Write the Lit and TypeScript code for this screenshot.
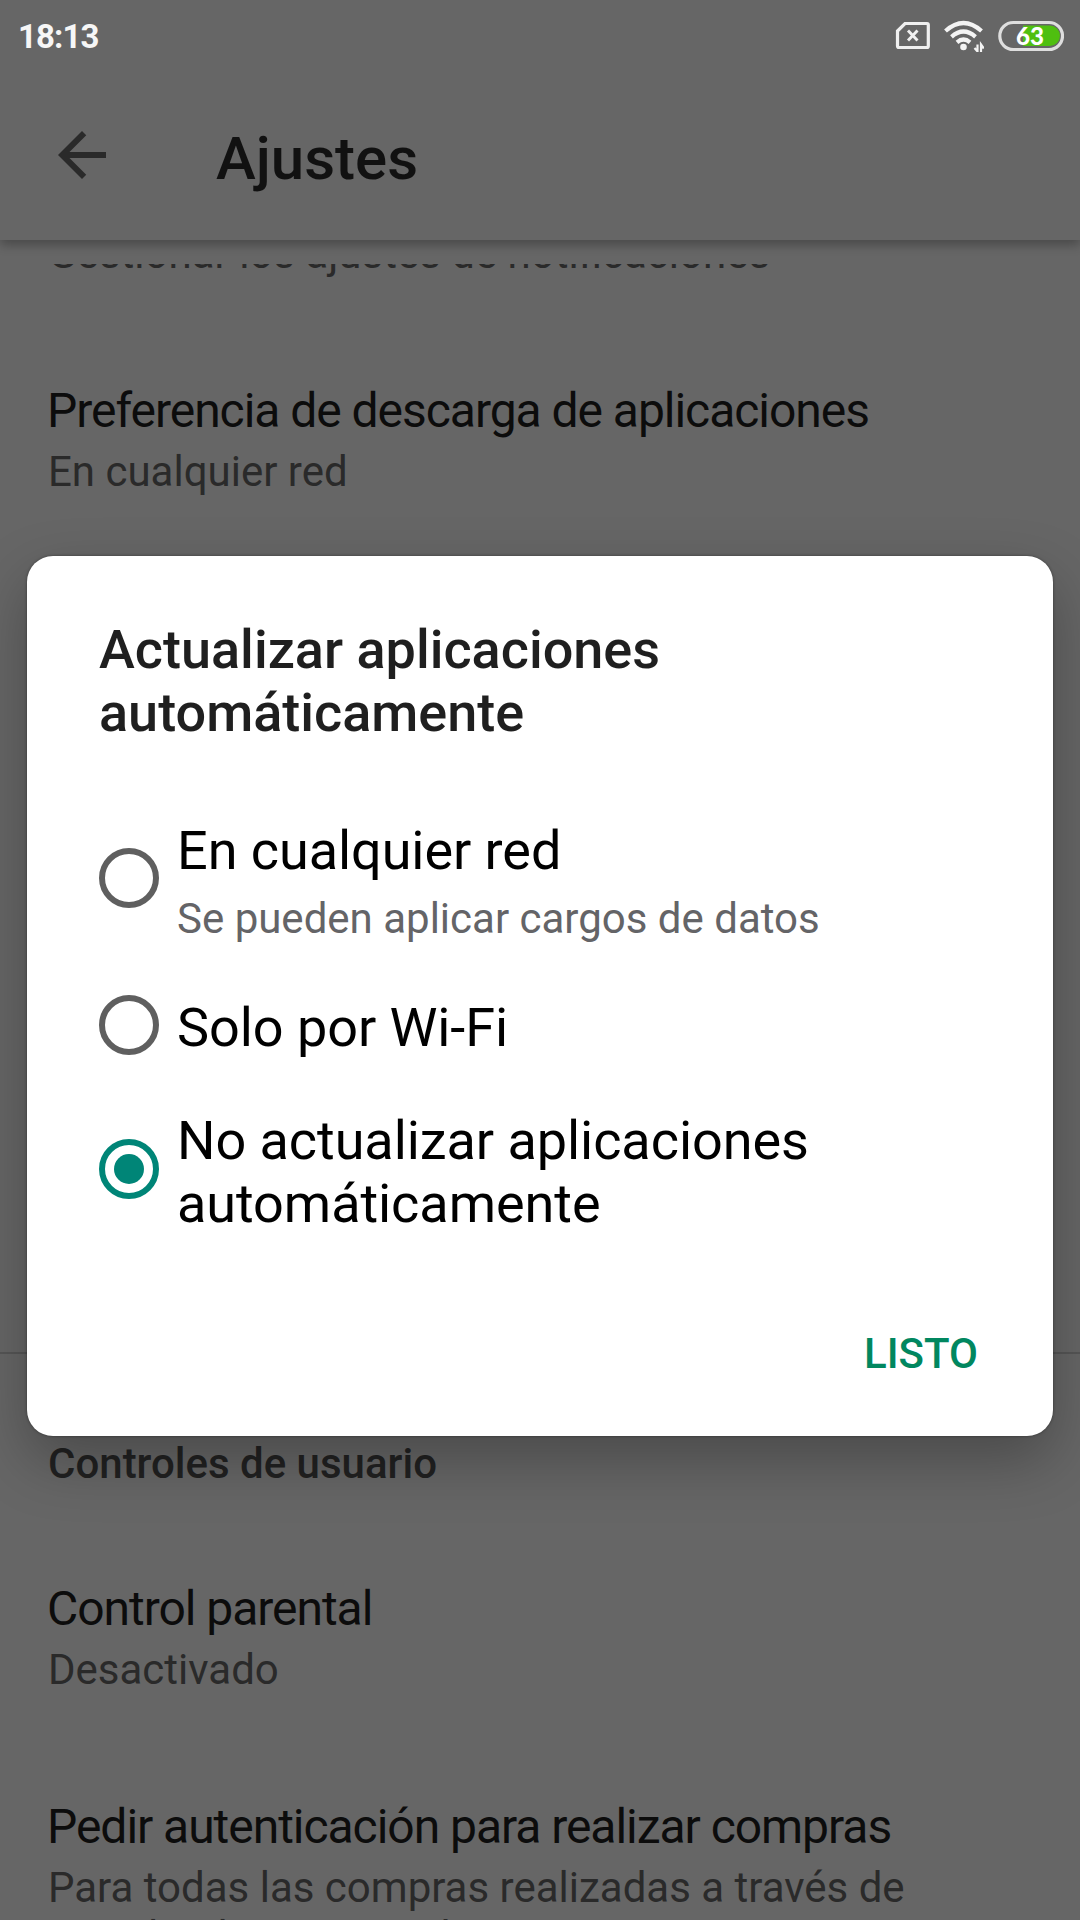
import { LitElement, html, svg, css } from "lit";
import { customElement, property, state } from "lit/decorators.js";

@customElement("status-bar")
class StatusBar extends LitElement {
  static styles = css`
    :host {
      display: flex;
      justify-content: space-between;
      align-items: flex-start;
      height: 72px;
      padding: 0 16px 0 18px;
      box-sizing: border-box;
    }
    .clock {
      font-size: 33px;
      font-weight: 700;
      line-height: 38px;
      padding-top: 18px;
      letter-spacing: -0.9px;
      color: #f6f6f6;
    }
    .icons {
      display: flex;
      gap: 14px;
      padding-top: 20px;
    }
    .icons svg {
      display: block;
    }
    .level {
      font: 900 25px Lato, sans-serif;
    }
  `;
  render() {
    return html`
      <span class="clock">18:13</span>
      <div class="icons">
        <svg width="35" height="32" viewBox="0 0 35 32" fill="none" stroke="#f0f0f0">
          <path d="M10 3.500H32Q33.300 3.500 33.300 5V26Q33.300 27.500 32 27.500H4Q2.500 27.500 2.500 26V11Z" stroke-width="3.200" />
          <path d="M13 10.500L22.500 20.500M22.500 10.500L13 20.500" stroke-width="2.900" />
        </svg>
        <svg width="40" height="32" viewBox="0 0 40 32" fill="none" stroke="#f4f4f4">
          <path d="M1.500 11Q19.500 -5 37.500 11" stroke-width="4.200" />
          <path d="M7.500 16.800Q19.500 6.300 31.500 16.800" stroke-width="4.200" />
          <path d="M13 22.300Q19.500 16.800 26 22.300" stroke-width="4.200" />
          <circle cx="19.500" cy="27" r="3.300" fill="#f4f4f4" stroke="none" />
          <path d="M33.500 24.500V32M30.500 28L33.500 31.500M37 32V24.500L39.800 28.500" stroke-width="2.200" />
        </svg>
        <svg width="66" height="32" viewBox="0 0 66 32">
          <clipPath id="cell"><rect x="5" y="5.500" width="57" height="20.500" rx="10.200" /></clipPath>
          <rect x="25" y="5" width="37" height="22" fill="#4fbf10" clip-path="url(#cell)" />
          <rect x="1.800" y="2.500" width="62.700" height="27" rx="13.500" fill="none" stroke="#dedede" stroke-width="3.200" />
          <text class="level" x="18" y="25" textLength="28" lengthAdjust="spacingAndGlyphs" fill="#fff">63</text>
        </svg>
      </div>
    `;
  }
}

@customElement("setting-row")
class SettingRow extends LitElement {
  @property() heading = "";
  @property() summary = "";
  static styles = css`
    :host {
      display: flex;
      flex-direction: column;
      gap: 8px;
    }
    .heading {
      margin-left: -1px;
      font-size: 48px;
      line-height: 57px;
      letter-spacing: -1.04px;
      color: #0c0c0c;
      white-space: nowrap;
    }
    .summary {
      font-size: 42px;
      line-height: 49px;
      color: #2a2a2a;
      white-space: pre-line;
    }
  `;
  render() {
    return html`
      ${this.heading ? html`<div class="heading">${this.heading}</div>` : null}
      <div class="summary">${this.summary}</div>
    `;
  }
}

@customElement("radio-option")
class RadioOption extends LitElement {
  @property() label = "";
  @property() note = "";
  @property({ type: Boolean }) checked = false;
  static styles = css`
    :host {
      display: flex;
      align-items: center;
      gap: 18px;
    }
    .dial {
      flex: none;
      display: block;
      margin-bottom: var(--dial-lift, 6px);
    }
    .text {
      display: flex;
      flex-direction: column;
      gap: 12px;
    }
    .label {
      font-size: 54px;
      line-height: 63px;
      letter-spacing: -0.06px;
      color: #000;
      white-space: pre-line;
    }
    .note {
      font-size: 42px;
      line-height: 49px;
      color: #646467;
    }
  `;
  render() {
    const color = this.checked ? "#008577" : "#5f5f5f";
    return html`
      <svg class="dial" width="60" height="60" viewBox="0 0 60 60">
        <circle cx="30" cy="30" r="27" fill="none" stroke=${color} stroke-width="6" />
        ${this.checked ? svg`<circle cx="30" cy="30" r="15" fill=${color} />` : null}
      </svg>
      <div class="text">
        <div class="label">${this.label}</div>
        ${this.note ? html`<div class="note">${this.note}</div>` : null}
      </div>
    `;
  }
}

@customElement("app-root")
class AppRoot extends LitElement {
  @state() selected = 2;

  options = [
    { label: "En cualquier red", note: "Se pueden aplicar cargos de datos" },
    { label: "Solo por Wi-Fi", note: "" },
    { label: "No actualizar aplicaciones\nautomáticamente", note: "" },
  ];

  static styles = css`
    :host {
      display: block;
      position: relative;
      width: 1080px;
      height: 1920px;
      overflow: hidden;
      background: #666;
      font-family: Roboto, sans-serif;
    }
    .page {
      display: flex;
      flex-direction: column;
      height: 100%;
    }
    .top {
      flex: none;
      height: 240px;
      margin-bottom: 24px;
      background: #666;
      box-shadow: 0 5px 10px rgba(0, 0, 0, 0.28);
    }
    .bar {
      display: flex;
      align-items: center;
      height: 168px;
      padding-left: 46px;
      box-sizing: border-box;
    }
    .back {
      display: block;
      margin-bottom: 3px;
    }
    .bar-title {
      margin: 6px 0 0 98px;
      font-size: 60px;
      font-weight: 500;
      line-height: 70px;
      color: #111;
    }
    .list {
      flex: 1;
      min-height: 0;
      overflow: hidden;
      padding-left: 48px;
    }
    .notifications {
      margin-top: -35px;
    }
    .download {
      margin-top: 104px;
    }
    .section {
      margin-top: 856px;
      margin-left: -48px;
      padding: 85px 0 0 48px;
      border-top: 2px solid #565656;
      font-size: 42px;
      font-weight: 500;
      line-height: 49px;
      color: #212121;
    }
    .parental {
      margin-top: 92px;
    }
    .purchases {
      margin-top: 104px;
    }
    .dialog {
      position: absolute;
      left: 27px;
      top: 556px;
      width: 1026px;
      height: 880px;
      box-sizing: border-box;
      padding: 62px 75px 58px 72px;
      display: flex;
      flex-direction: column;
      border-radius: 26px;
      background: #fff;
      box-shadow: 0 0 3px rgba(0, 0, 0, 0.4), 0 24px 60px rgba(0, 0, 0, 0.28);
    }
    .dialog-title {
      font-size: 54px;
      font-weight: 500;
      line-height: 63px;
      color: #1f1f1f;
      white-space: pre-line;
    }
    .options {
      display: flex;
      flex-direction: column;
      gap: 48px;
      margin-top: 75px;
    }
    .options radio-option:first-child {
      margin-bottom: 4px;
    }
    .options radio-option:nth-child(2) {
      --dial-lift: 5px;
      margin-bottom: 1px;
    }
    .actions {
      display: flex;
      justify-content: flex-end;
      margin-top: auto;
    }
    .done {
      font: 500 42px/49px Roboto, sans-serif;
      padding: 0;
      border: 0;
      background: none;
      color: #01875f;
    }
  `;

  render() {
    return html`
      <div class="page">
        <header class="top">
          <status-bar></status-bar>
          <div class="bar">
            <svg class="back" width="72" height="72" viewBox="0 0 24 24" fill="#2a2a2a">
              <path d="M20 11H7.830l5.590-5.590L12 4l-8 8 8 8 1.410-1.410L7.830 13H20v-2z" />
            </svg>
            <div class="bar-title">Ajustes</div>
          </div>
        </header>
        <main class="list">
          <setting-row class="notifications" summary="Gestionar los ajustes de notificaciones"></setting-row>
          <setting-row class="download" heading="Preferencia de descarga de aplicaciones" summary="En cualquier red"></setting-row>
          <div class="section">Controles de usuario</div>
          <setting-row class="parental" heading="Control parental" summary="Desactivado"></setting-row>
          <setting-row
            class="purchases"
            heading="Pedir autenticación para realizar compras"
            .summary=${"Para todas las compras realizadas a través de\nGoogle Play en este dispositivo"}
          ></setting-row>
        </main>
      </div>
      <div class="dialog" role="dialog">
        <div class="dialog-title">${"Actualizar aplicaciones\nautomáticamente"}</div>
        <div class="options">
          ${this.options.map(
            (o, i) => html`<radio-option
              .label=${o.label}
              .note=${o.note}
              ?checked=${i === this.selected}
              @click=${() => (this.selected = i)}
            ></radio-option>`
          )}
        </div>
        <div class="actions"><button class="done">LISTO</button></div>
      </div>
    `;
  }
}
